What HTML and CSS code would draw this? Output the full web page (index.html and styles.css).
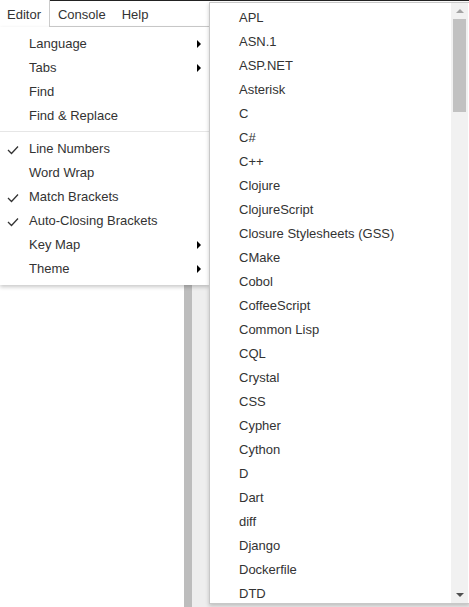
FILE: index.html
```html
<!DOCTYPE html>
<html>
<head>
<meta charset="utf-8">
<link rel="stylesheet" href="styles.css">
</head>
<body>
<div class="app">
  <div class="menubar">
    <div class="tab active">Editor</div>
    <div class="tab">Console</div>
    <div class="tab">Help</div>
  </div>
  <div class="panes">
    <div class="pane-left"></div>
    <div class="splitter"></div>
    <div class="pane-right"></div>
  </div>

  <div class="dropdown">
    <div class="item">Language<span class="arrow"></span></div>
    <div class="item">Tabs<span class="arrow"></span></div>
    <div class="item">Find</div>
    <div class="item">Find &amp; Replace</div>
    <div class="sep"></div>
    <div class="item"><svg class="check" width="12" height="10" viewBox="0 0 12 10"><polyline points="1,5 4.5,8.5 11,1.5" fill="none" stroke="#333" stroke-width="1.3"/></svg>Line Numbers</div>
    <div class="item">Word Wrap</div>
    <div class="item"><svg class="check" width="12" height="10" viewBox="0 0 12 10"><polyline points="1,5 4.5,8.5 11,1.5" fill="none" stroke="#333" stroke-width="1.3"/></svg>Match Brackets</div>
    <div class="item"><svg class="check" width="12" height="10" viewBox="0 0 12 10"><polyline points="1,5 4.5,8.5 11,1.5" fill="none" stroke="#333" stroke-width="1.3"/></svg>Auto-Closing Brackets</div>
    <div class="item">Key Map<span class="arrow"></span></div>
    <div class="item">Theme<span class="arrow"></span></div>
  </div>

  <div class="submenu">
    <div class="list">
      <div class="sitem">APL</div>
      <div class="sitem">ASN.1</div>
      <div class="sitem">ASP.NET</div>
      <div class="sitem">Asterisk</div>
      <div class="sitem">C</div>
      <div class="sitem">C#</div>
      <div class="sitem">C++</div>
      <div class="sitem">Clojure</div>
      <div class="sitem">ClojureScript</div>
      <div class="sitem">Closure Stylesheets (GSS)</div>
      <div class="sitem">CMake</div>
      <div class="sitem">Cobol</div>
      <div class="sitem">CoffeeScript</div>
      <div class="sitem">Common Lisp</div>
      <div class="sitem">CQL</div>
      <div class="sitem">Crystal</div>
      <div class="sitem">CSS</div>
      <div class="sitem">Cypher</div>
      <div class="sitem">Cython</div>
      <div class="sitem">D</div>
      <div class="sitem">Dart</div>
      <div class="sitem">diff</div>
      <div class="sitem">Django</div>
      <div class="sitem">Dockerfile</div>
      <div class="sitem">DTD</div>
    </div>
    <div class="scrollbar">
      <div class="sb-btn"><span class="tri-up"></span></div>
      <div class="sb-track"><div class="sb-thumb"></div></div>
      <div class="sb-btn"><span class="tri-down"></span></div>
    </div>
  </div>
</div>
</body>
</html>
```
FILE: styles.css
```css
html, body {
  margin: 0;
  padding: 0;
  background: #fff;
}
body {
  font-family: "Liberation Sans", Arial, sans-serif;
  font-size: 13px;
  color: #333;
}
.app {
  position: relative;
  height: 607px;
  display: flex;
  flex-direction: column;
  overflow: hidden;
}
.menubar {
  display: flex;
  border-top: 1px solid #222;
  border-bottom: 1px solid #ccc;
  box-sizing: border-box;
  height: 27px;
  background: #fff;
}
.tab {
  padding: 1px 8px 0;
  line-height: 25px;
  white-space: nowrap;
}
.tab.active {
  margin-top: -1px;
  padding: 2px 8px 0 7px;
  border-right: 1px solid #ccc;
  background: #fff;
  margin-bottom: -1px;
}
.panes {
  flex: 1;
  display: grid;
  grid-template-columns: 184px 8px 1fr;
}
.pane-left { background: #fff; }
.splitter { background: #bdbdbd; }
.pane-right { background: #eeeeee; }

.dropdown {
  position: absolute;
  top: 27px;
  left: 0;
  width: 209px;
  padding: 4px 0 5px;
  background: #fff;
  box-shadow: 0 2px 4px rgba(0,0,0,0.22);
  box-sizing: border-box;
}
.item {
  position: relative;
  height: 23px;
  padding-top: 1px;
  line-height: 24px;
  padding-left: 29px;
  white-space: nowrap;
}
.sep {
  height: 1px;
  background: #e6e6e6;
  margin: 4px 0;
}
.check {
  position: absolute;
  left: 7px;
  top: 9px;
}
.arrow {
  position: absolute;
  left: 197px;
  top: 9px;
  width: 0;
  height: 0;
  border-left: 4px solid #000;
  border-top: 4px solid transparent;
  border-bottom: 4px solid transparent;
}

.submenu {
  position: absolute;
  top: 2px;
  left: 209px;
  width: 261px;
  height: 602px;
  box-sizing: border-box;
  background: #fff;
  border: 1px solid #c8c8c8;
  box-shadow: 0 2px 4px rgba(0,0,0,0.2);
  display: flex;
  overflow: hidden;
}
.list {
  flex: 1;
  padding-top: 3px;
  overflow: hidden;
}
.sitem {
  height: 24px;
  line-height: 24px;
  padding-left: 29px;
  white-space: nowrap;
}
.scrollbar {
  width: 17px;
  margin-right: 1px;
  background: #f1f1f1;
  display: flex;
  flex-direction: column;
}
.sb-btn {
  height: 16px;
  display: flex;
  align-items: center;
  justify-content: center;
}
.sb-track {
  flex: 1;
  padding: 0 2px;
}
.sb-thumb {
  height: 93px;
  background: #c1c1c1;
}
.tri-up {
  width: 0;
  height: 0;
  border-left: 4px solid transparent;
  border-right: 4px solid transparent;
  border-bottom: 4px solid #a3a3a3;
}
.tri-down {
  width: 0;
  height: 0;
  border-left: 4px solid transparent;
  border-right: 4px solid transparent;
  border-top: 4px solid #505050;
}
```
